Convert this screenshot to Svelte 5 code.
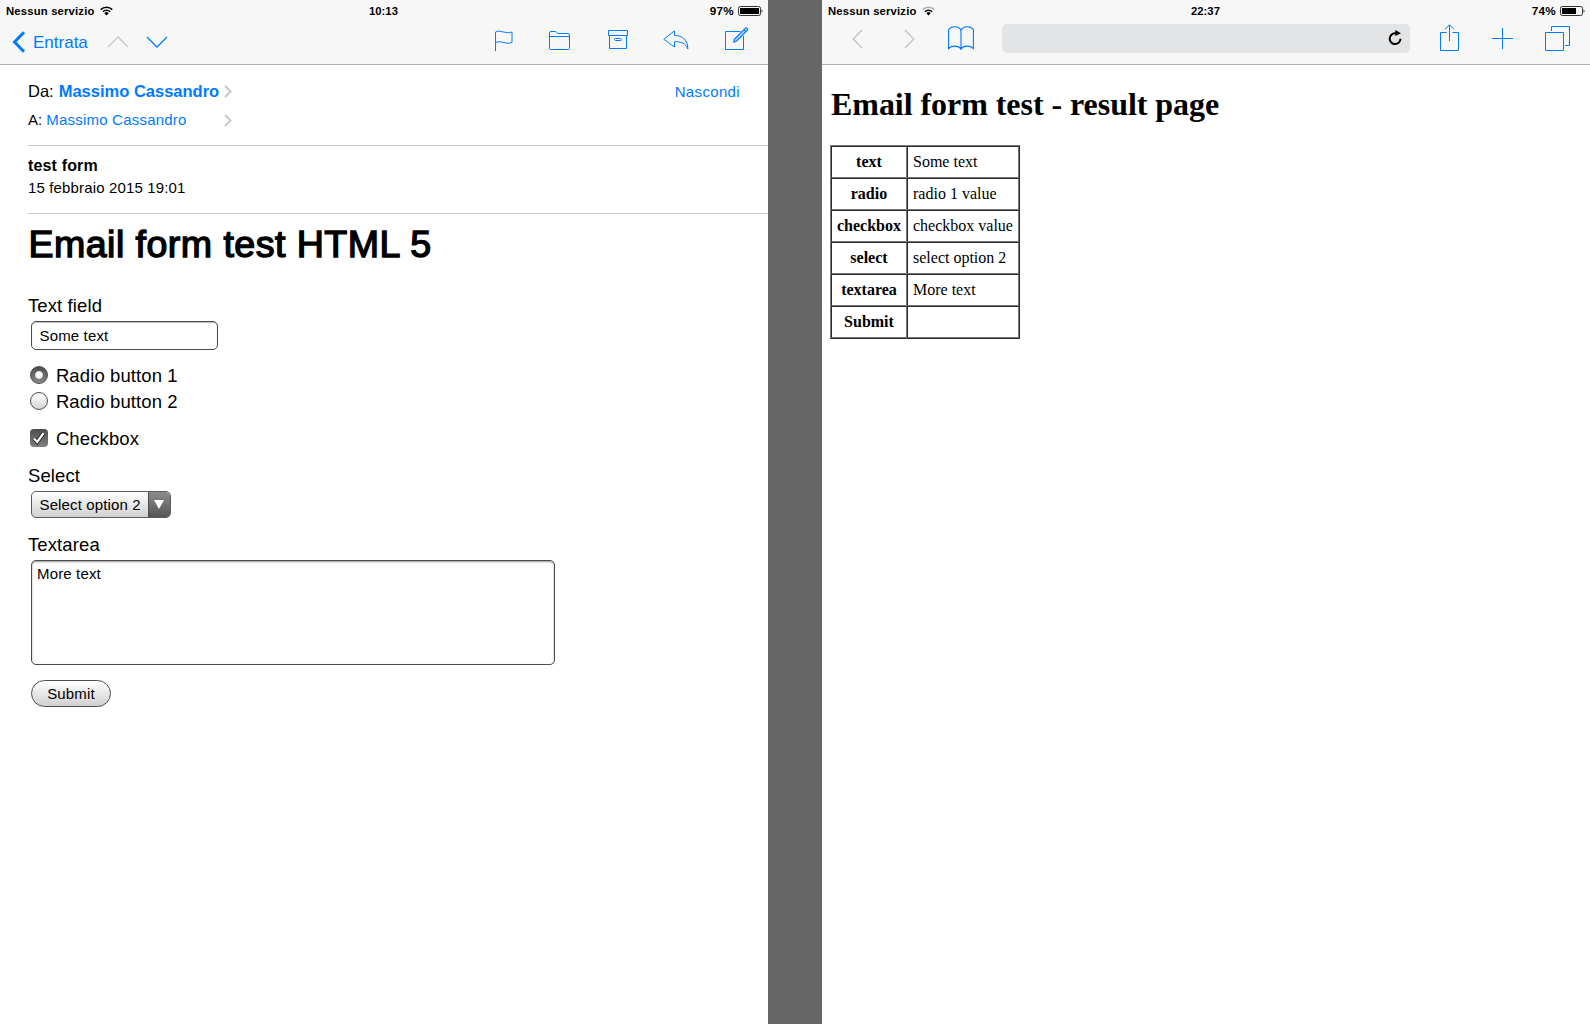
<script>
  const results = [
    ['text', 'Some text'],
    ['radio', 'radio 1 value'],
    ['checkbox', 'checkbox value'],
    ['select', 'select option 2'],
    ['textarea', 'More text'],
    ['Submit', ''],
  ];
</script>

{#snippet wifi(weak)}
  <svg class="wifi" width="13" height="10" viewBox="0 0 13 10" fill="none" stroke="#000" stroke-width="1.5">
    <path d="M.7 3.6a8.3 8.3 0 0 1 11.6 0" class:weak />
    <path d="M2.8 5.8a5.3 5.3 0 0 1 7.4 0" />
    <path d="M4.3 7.2a3.1 3.1 0 0 1 4.4 0L6.5 9.5z" fill="#000" stroke="none" />
  </svg>
{/snippet}

{#snippet battery(level)}
  <svg class="battery" width="25" height="10" viewBox="0 0 25 10">
    <rect x=".5" y=".5" width="22" height="9" rx="1.8" fill="none" stroke="#333" />
    <rect x="2" y="2" width={level} height="6" fill="#000" />
    <path d="M23.6 3.2c1.2.5 1.2 3.1 0 3.6z" fill="#222" />
  </svg>
{/snippet}

<div class="screens">
  <section class="pane">
    <header>
      <div class="status">
        <span class="carrier">Nessun servizio</span>
        {@render wifi(false)}
        <span class="time">10:13</span>
        <span class="pct">97%</span>
        {@render battery(19)}
      </div>
      <nav class="mail-nav">
        <svg class="back" width="14" height="22" viewBox="0 0 14 22" fill="none" stroke="#007aff" stroke-width="3"><path d="M12 1.200 2.500 11l9.500 9.800" /></svg>
        <span class="inbox">Entrata</span>
        <svg class="up" width="22" height="14" viewBox="0 0 22 14" fill="none" stroke="#c7c7c7" stroke-width="1.300"><path d="m1 12 10-10 10 10" /></svg>
        <svg class="down" width="22" height="14" viewBox="0 0 22 14" fill="none" stroke="#007aff" stroke-width="1.300"><path d="m1 2 10 10 10-10" /></svg>
        <svg class="flag" width="18" height="22" viewBox="0 0 18 22" fill="none" stroke="#007aff"><path d="M.5 21V2c5-2.600 10 2.400 16.500 0v10.500c-6.500 2.400-11.500-2.600-16.500 0" /></svg>
        <svg class="folder" width="21" height="20" viewBox="0 0 21 20" fill="none" stroke="#007aff"><path d="M.5 17.500V2q0-1.500 1.500-1.500h4.500q.8 0 1.200 1 .4 1 1.300 1h10q1.500 0 1.500 1.500v13.500q0 1-1 1h-18q-1 0-1-1zM.5 5.500h20" /></svg>
        <svg class="archive" width="20" height="20" viewBox="0 0 20 20" fill="none" stroke="#007aff"><path d="M.5.500h19v5H.5zM1.500 5.500v13h17v-13" /><rect x="6.500" y="8.500" width="7" height="2" rx="1" /></svg>
        <svg class="reply" width="26" height="20" viewBox="0 0 26 20" fill="none" stroke="#007aff" stroke-linejoin="round"><path d="M11.500.800.800 9.300l10.700 7.700v-5.200c6-.5 11.500 1.500 13.300 7.200C25 10.500 20 5.500 11.500 5.500z" /></svg>
        <svg class="compose" width="24" height="24" viewBox="0 0 24 24" fill="none" stroke="#007aff"><path d="M15.500 4.500H.5v18h18V9" /><path d="m8.800 15 .8-3L20.300 1.300q.8-.8 1.800.1 1 1 .2 1.900L11.600 14zM19 2.600l2 2" fill="#b5d6f9" stroke-width="1.200" /></svg>
      </nav>
    </header>

    <div class="addresses">
      <div class="line from">
        <span>Da:</span><span class="link sender">Massimo Cassandro</span>
        <svg class="chev" width="8" height="13" viewBox="0 0 8 13" fill="none" stroke="#c7c7cc" stroke-width="2"><path d="m1 1 5.500 5.500L1 12" /></svg>
        <span class="link hide">Nascondi</span>
      </div>
      <div class="line to">
        <span>A:</span><span class="link recipient">Massimo Cassandro</span>
        <svg class="chev" width="8" height="13" viewBox="0 0 8 13" fill="none" stroke="#c7c7cc" stroke-width="2"><path d="m1 1 5.500 5.500L1 12" /></svg>
      </div>
    </div>
    <div class="subject">
      <div class="title">test form</div>
      <div class="date">15 febbraio 2015 19:01</div>
    </div>

    <main class="form">
      <h1>Email form test HTML 5</h1>
      <div class="label">Text field</div>
      <div class="input">Some text</div>
      <div class="choice first"><span class="radio on"></span><span>Radio button 1</span></div>
      <div class="choice"><span class="radio"></span><span>Radio button 2</span></div>
      <div class="choice check">
        <span class="box"><svg width="18" height="18" viewBox="0 0 18 18" fill="none"><path d="m4 9.500 3.200 3.500 6.300-8.800" stroke="#222" stroke-width="4" /><path d="m4 9.500 3.200 3.500 6.300-8.800" stroke="#fff" stroke-width="2.300" /></svg></span>
        <span>Checkbox</span>
      </div>
      <div class="label select-label">Select</div>
      <div class="select"><span class="value">Select option 2</span><span class="arrow"><svg width="10" height="9" viewBox="0 0 10 9"><path d="M0 0h10L5 9z" fill="#fff" /></svg></span></div>
      <div class="label area-label">Textarea</div>
      <div class="textarea">More text</div>
      <div class="submit">Submit</div>
    </main>
  </section>

  <section class="pane">
    <header>
      <div class="status">
        <span class="carrier">Nessun servizio</span>
        {@render wifi(true)}
        <span class="time">22:37</span>
        <span class="pct">74%</span>
        {@render battery(14)}
      </div>
      <nav class="web-nav">
        <svg class="prev" width="11" height="20" viewBox="0 0 11 20" fill="none" stroke="#c4c4c4" stroke-width="1.400"><path d="M10 1 1.200 10l8.800 9" /></svg>
        <svg class="next" width="11" height="20" viewBox="0 0 11 20" fill="none" stroke="#c4c4c4" stroke-width="1.400"><path d="m1 1 8.800 9L1 19" /></svg>
        <svg class="book" width="26" height="25" viewBox="0 0 26 25" fill="none" stroke="#007aff" stroke-width="1.100"><path d="M13 24V4.500C11-.300 3.500-.300.600 3.500v19c3.500-3.200 10-3.200 12.400.500 2.400-3.700 8.900-3.700 12.400-.5v-19C22.500-.300 15-.300 13 4.500" /></svg>
        <div class="url">
          <svg width="14" height="16" viewBox="0 0 14 16"><path d="M8.500 3.300H7a5.400 5.400 0 1 0 5.500 5.500" fill="none" stroke="#000" stroke-width="2" /><path d="M7.300 0 13 3.300 7.300 6z" /></svg>
        </div>
        <svg class="share" width="19" height="28" viewBox="0 0 19 28" fill="none" stroke="#007aff"><path d="M6.500 8.500h-6v18h18v-18h-6M9.500 17V1M5 5.300 9.500.800 14 5.300" /></svg>
        <svg class="plus" width="21" height="21" viewBox="0 0 21 21" stroke="#007aff"><path d="M10.500 0v21M0 10.500h21" /></svg>
        <svg class="tabs" width="25" height="25" viewBox="0 0 25 25" fill="none" stroke="#007aff"><path d="M.5 6.500h18v18H.5zM6.500 5V.500h18v19H20" /></svg>
      </nav>
    </header>
    <main class="result">
      <h1>Email form test - result page</h1>
      <table>
        <tbody>
          {#each results as [name, value]}
            <tr><th>{name}</th><td>{value}</td></tr>
          {/each}
        </tbody>
      </table>
    </main>
  </section>
</div>

<style>
  :global(body) { margin: 0; }
  .screens {
    display: flex;
    justify-content: space-between;
    width: 1590px;
    height: 1024px;
    overflow: hidden;
    background: #666;
    color: #000;
    font: 15px/20px "Liberation Sans", Arial, sans-serif;
    white-space: nowrap;
  }
  .screens * { box-sizing: border-box; }
  svg { flex: none; display: block; }
  .pane { width: 768px; background: #fff; }
  header { height: 65px; background: #f7f7f7; border-bottom: 1px solid #b2b2b2; }
  .status {
    display: flex;
    align-items: center;
    height: 20px;
    padding: 1px 5px 0 6px;
    font-size: 11.300px;
    font-weight: 700;
  }
  .status span { line-height: 20px; }
  .carrier { width: 89px; letter-spacing: 0.170px; }
  .wifi { margin-left: 5px; }
  .weak { stroke: #aaa; }
  .time { margin-left: 254.500px; width: 32px; text-align: center; }
  .pct { margin-left: auto; margin-right: 4px; font-size: 11.700px; letter-spacing: 0.300px; }
  nav { display: flex; align-items: flex-start; height: 44px; }
  .link, .inbox { color: #007aff; }
  .back { margin: 11px 0 0 12px; }
  .inbox { margin: 13px 0 0 7px; width: 56px; font-size: 17px; }
  .up { margin: 15px 0 0 17.500px; }
  .down { margin: 15px 0 0 17px; }
  .flag { margin: 10px 0 0 327.500px; }
  .folder { margin: 11px 0 0 36px; }
  .archive { margin: 10px 0 0 38px; }
  .reply { margin: 10px 0 0 35px; }
  .compose { margin: 7px 0 0 36px; }

  .addresses { height: 81px; margin-left: 28px; padding-top: 16px; border-bottom: 1px solid #c8c8c8; }
  .line { display: flex; align-items: flex-start; height: 20px; }
  .from { font-size: 16.500px; }
  .to { margin-top: 9px; font-size: 15px; }
  .sender { margin-left: 5px; width: 161px; font-weight: 700; }
  .recipient { margin-left: 4px; width: 178px; letter-spacing: 0.220px; }
  .from .chev { margin: 4px 0 0 4px; }
  .to .chev { margin: 4px 0 0 0; }
  .hide { margin: 1px 28px 0 auto; font-size: 15px; letter-spacing: 0.350px; }
  .subject { height: 68px; margin-left: 28px; padding-top: 10px; border-bottom: 1px solid #c8c8c8; }
  .title { font-size: 16px; font-weight: 700; letter-spacing: 0.150px; }
  .date { margin-top: 2px; letter-spacing: 0.150px; }

  .form { padding: 8px 0 0 28px; }
  .form h1 { margin: 0 0 30px 0.500px; height: 44px; line-height: 44px; font-size: 37.600px; font-weight: 400; letter-spacing: 0.450px; -webkit-text-stroke: 1.400px #000; }
  .label, .choice { font-size: 18.500px; height: 20px; letter-spacing: 0.110px; }
  .input {
    width: 187px; height: 29px; margin: 5px 0 0 3px; padding: 0 7.500px;
    line-height: 28px; letter-spacing: 0.150px; border: 1px solid #4c4c4c; border-radius: 5px;
    box-shadow: inset 0 1px 1px #bbb;
  }
  .choice { display: flex; align-items: center; gap: 7.500px; height: 26px; margin-left: 2.400px; padding-top: 1px; }
  .first { margin-top: 12px; }
  .check { margin-top: 11px; }
  .radio { width: 18px; height: 18px; margin-top: -2px; border: 1px solid #4c4c4c; border-radius: 50%; background: linear-gradient(#fff, #d5d5d5); }
  .radio.on { background: radial-gradient(circle at 50% 50%, #fff 0 2px, #ddd 3.500px, transparent 4.500px), linear-gradient(#4c4c4c, #888); }
  .box { width: 18px; height: 18px; margin-top: -2px; border-radius: 4px; background: linear-gradient(#4c4c4c, #808080); }
  .select-label { margin-top: 15px; }
  .select {
    display: flex; width: 140px; height: 27px; margin: 5px 0 0 3px;
    border: 1px solid #5c5c5c; border-radius: 5px; overflow: hidden;
    background: linear-gradient(#fff, #d0d0d0);
  }
  .value { width: 116px; padding-left: 7.500px; line-height: 25px; letter-spacing: 0.130px; }
  .arrow { display: flex; flex: 1; justify-content: center; padding: 8px 1px 0 0; border-left: 1px solid #4c4c4c; background: linear-gradient(#8c8c8c, #555); }
  .area-label { margin-top: 17px; }
  .textarea {
    width: 524px; height: 105px; margin: 5px 0 0 3px; padding: 3px 5px; letter-spacing: 0.150px;
    border: 1px solid #4c4c4c; border-radius: 5px; box-shadow: inset 0 1px 2px #999;
  }
  .submit {
    width: 80px; height: 27px; margin: 15px 0 0 3px; line-height: 26px; text-align: center; letter-spacing: 0.150px;
    border: 1px solid #4c4c4c; border-radius: 14px; background: linear-gradient(#fff, #d0d0d0);
  }

  .prev { margin: 9px 0 0 30px; }
  .next { margin: 9px 0 0 41px; }
  .book { margin: 6px 0 0 33px; }
  .url { display: flex; justify-content: flex-end; width: 408px; height: 29px; margin: 4px 0 0 28px; padding: 6px 8.500px 0 0; border-radius: 5px; background: #e3e4e6; }
  .share { margin: 4px 0 0 30px; }
  .plus { margin: 8px 0 0 33px; }
  .tabs { margin: 6px 0 0 32px; }
  .result { padding: 21px 0 0 8px; font-family: "Liberation Serif", "Times New Roman", serif; }
  .result h1 { margin: 0 0 22px 1px; height: 37px; line-height: 37px; font-size: 32px; font-weight: 700; letter-spacing: -0.050px; }
  table {
    width: 190px; border-collapse: separate; border-spacing: 0; table-layout: fixed;
    font-size: 16px; line-height: 20px;
    border: 1px solid; border-color: #777 #2b2b2b #2b2b2b #777;
  }
  th, td {
    height: 32px; padding: 0 5px; font-weight: 400; text-align: left;
    border: 1px solid; border-color: #2b2b2b #777 #777 #2b2b2b;
  }
  th { width: 76px; padding: 0; font-weight: 700; text-align: center; }
</style>
